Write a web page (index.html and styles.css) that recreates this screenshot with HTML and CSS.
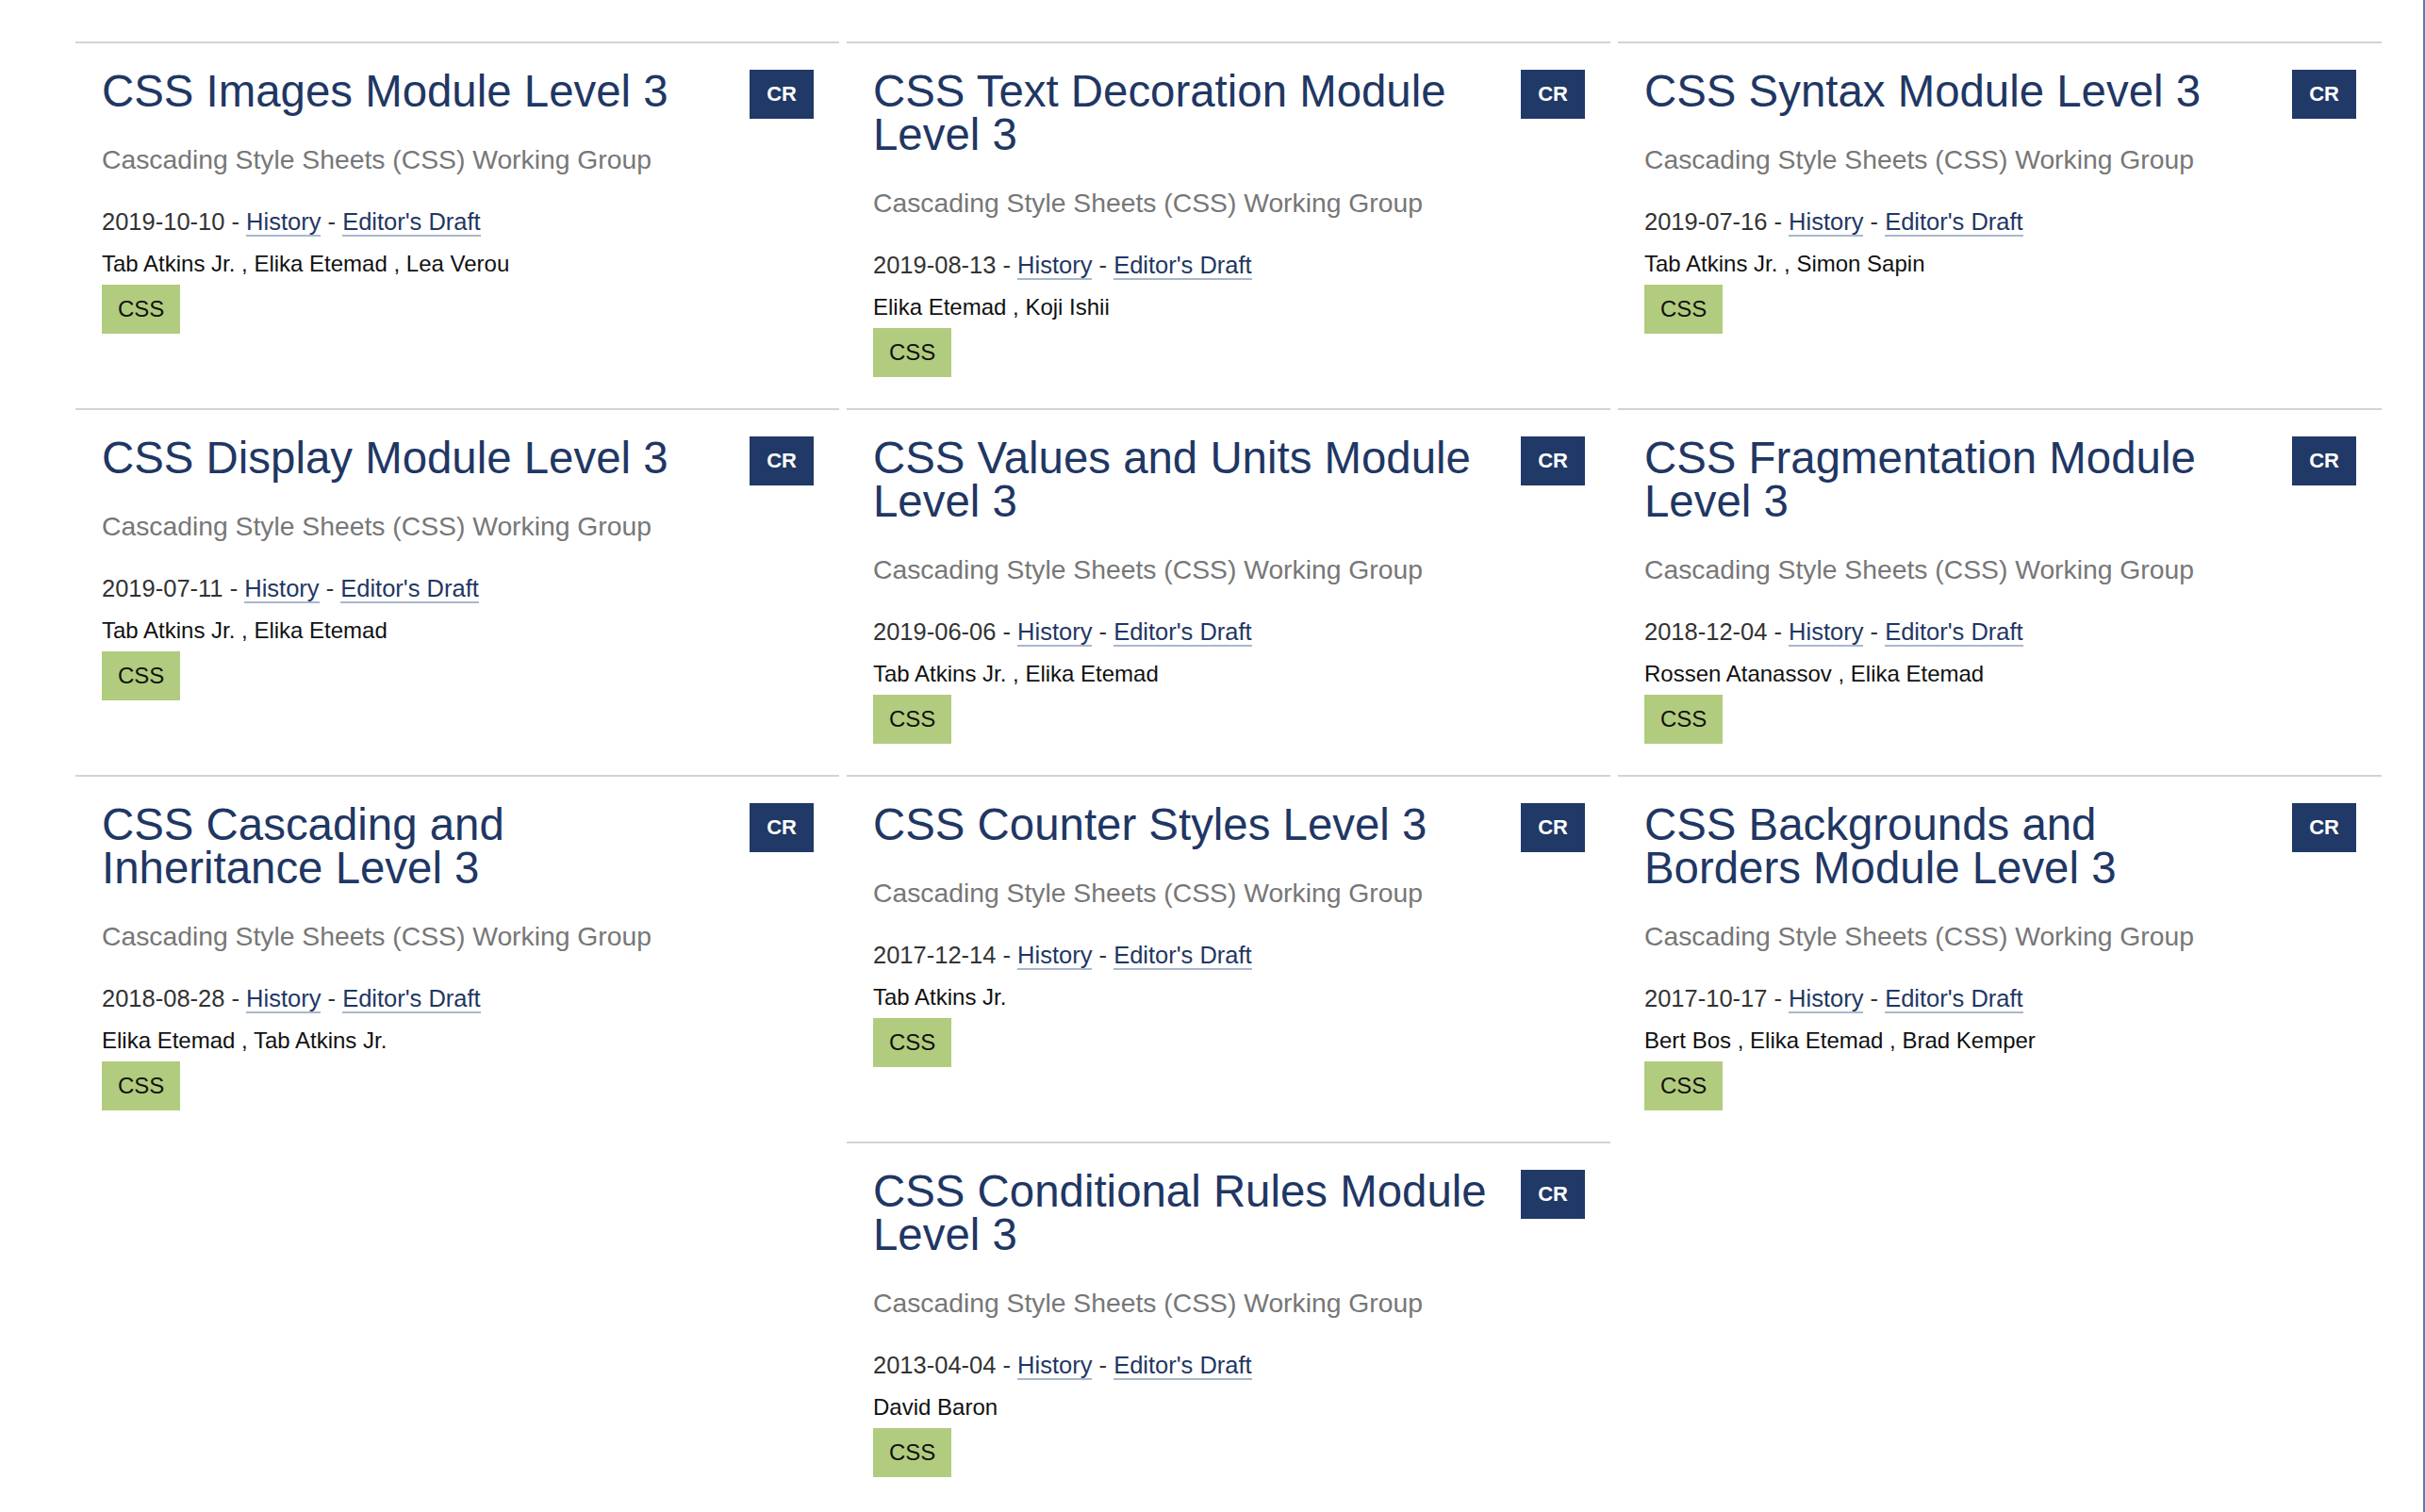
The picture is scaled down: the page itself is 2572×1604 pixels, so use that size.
FILE: index.html
```html
<!DOCTYPE html>
<html lang="en">
<head>
<meta charset="utf-8">
<title>CSS Specifications</title>
<link rel="stylesheet" href="styles.css">
</head>
<body>
<div class="page">
  <main class="specs">
    <div class="spec-list">
      <article class="spec">
        <div class="spec-head">
          <h2 class="spec-title">CSS Images Module Level 3</h2>
          <span class="status">CR</span>
        </div>
        <p class="group">Cascading Style Sheets (CSS) Working Group</p>
        <p class="meta">2019-10-10 - <a href="#">History</a> - <a href="#">Editor's Draft</a></p>
        <p class="editors">Tab Atkins Jr. , Elika Etemad , Lea Verou</p>
        <div class="tags"><span class="tag">CSS</span></div>
      </article>
      <article class="spec">
        <div class="spec-head">
          <h2 class="spec-title">CSS Text Decoration Module Level 3</h2>
          <span class="status">CR</span>
        </div>
        <p class="group">Cascading Style Sheets (CSS) Working Group</p>
        <p class="meta">2019-08-13 - <a href="#">History</a> - <a href="#">Editor's Draft</a></p>
        <p class="editors">Elika Etemad , Koji Ishii</p>
        <div class="tags"><span class="tag">CSS</span></div>
      </article>
      <article class="spec">
        <div class="spec-head">
          <h2 class="spec-title">CSS Syntax Module Level 3</h2>
          <span class="status">CR</span>
        </div>
        <p class="group">Cascading Style Sheets (CSS) Working Group</p>
        <p class="meta">2019-07-16 - <a href="#">History</a> - <a href="#">Editor's Draft</a></p>
        <p class="editors">Tab Atkins Jr. , Simon Sapin</p>
        <div class="tags"><span class="tag">CSS</span></div>
      </article>
      <article class="spec">
        <div class="spec-head">
          <h2 class="spec-title">CSS Display Module Level 3</h2>
          <span class="status">CR</span>
        </div>
        <p class="group">Cascading Style Sheets (CSS) Working Group</p>
        <p class="meta">2019-07-11 - <a href="#">History</a> - <a href="#">Editor's Draft</a></p>
        <p class="editors">Tab Atkins Jr. , Elika Etemad</p>
        <div class="tags"><span class="tag">CSS</span></div>
      </article>
      <article class="spec">
        <div class="spec-head">
          <h2 class="spec-title">CSS Values and Units Module Level 3</h2>
          <span class="status">CR</span>
        </div>
        <p class="group">Cascading Style Sheets (CSS) Working Group</p>
        <p class="meta">2019-06-06 - <a href="#">History</a> - <a href="#">Editor's Draft</a></p>
        <p class="editors">Tab Atkins Jr. , Elika Etemad</p>
        <div class="tags"><span class="tag">CSS</span></div>
      </article>
      <article class="spec">
        <div class="spec-head">
          <h2 class="spec-title">CSS Fragmentation Module Level 3</h2>
          <span class="status">CR</span>
        </div>
        <p class="group">Cascading Style Sheets (CSS) Working Group</p>
        <p class="meta">2018-12-04 - <a href="#">History</a> - <a href="#">Editor's Draft</a></p>
        <p class="editors">Rossen Atanassov , Elika Etemad</p>
        <div class="tags"><span class="tag">CSS</span></div>
      </article>
      <article class="spec">
        <div class="spec-head">
          <h2 class="spec-title">CSS Cascading and Inheritance Level 3</h2>
          <span class="status">CR</span>
        </div>
        <p class="group">Cascading Style Sheets (CSS) Working Group</p>
        <p class="meta">2018-08-28 - <a href="#">History</a> - <a href="#">Editor's Draft</a></p>
        <p class="editors">Elika Etemad , Tab Atkins Jr.</p>
        <div class="tags"><span class="tag">CSS</span></div>
      </article>
      <article class="spec">
        <div class="spec-head">
          <h2 class="spec-title">CSS Counter Styles Level 3</h2>
          <span class="status">CR</span>
        </div>
        <p class="group">Cascading Style Sheets (CSS) Working Group</p>
        <p class="meta">2017-12-14 - <a href="#">History</a> - <a href="#">Editor's Draft</a></p>
        <p class="editors">Tab Atkins Jr.</p>
        <div class="tags"><span class="tag">CSS</span></div>
      </article>
      <article class="spec">
        <div class="spec-head">
          <h2 class="spec-title">CSS Backgrounds and Borders Module Level 3</h2>
          <span class="status">CR</span>
        </div>
        <p class="group">Cascading Style Sheets (CSS) Working Group</p>
        <p class="meta">2017-10-17 - <a href="#">History</a> - <a href="#">Editor's Draft</a></p>
        <p class="editors">Bert Bos , Elika Etemad , Brad Kemper</p>
        <div class="tags"><span class="tag">CSS</span></div>
      </article>
      <article class="spec">
        <div class="spec-head">
          <h2 class="spec-title">CSS Conditional Rules Module Level 3</h2>
          <span class="status">CR</span>
        </div>
        <p class="group">Cascading Style Sheets (CSS) Working Group</p>
        <p class="meta">2013-04-04 - <a href="#">History</a> - <a href="#">Editor's Draft</a></p>
        <p class="editors">David Baron</p>
        <div class="tags"><span class="tag">CSS</span></div>
      </article>
    </div>
  </main>
  <div class="edge"></div>
</div>
</body>
</html>
```

FILE: styles.css
```css
html, body {
  margin: 0;
  padding: 0;
  background: #ffffff;
}

body {
  font-family: "Liberation Sans", Arial, Helvetica, sans-serif;
  color: #111111;
  overflow: hidden;
}

.page {
  display: flex;
  min-height: 100vh;
}

.specs {
  flex: 1;
  padding: 44px 0 0 80px;
}

.edge {
  flex: none;
  width: 2px;
  background: #5a7eb1;
}

.spec-list {
  width: 2446px;
  display: flex;
  flex-wrap: wrap;
  justify-content: center;
  column-gap: 8px;
}

.spec {
  box-sizing: border-box;
  width: 810px;
  border-top: 2px solid #d3d3d3;
  padding: 28px 27px 33px 28px;
}

.spec-head {
  display: flex;
  align-items: flex-start;
  gap: 33px;
}

.spec-title {
  flex: 1;
  margin: 0;
  font-size: 47.4px;
  line-height: 46px;
  font-weight: normal;
  color: #1f3764;
}

.status {
  flex: none;
  height: 52px;
  margin-bottom: -6px;
  padding: 0 18px;
  background: #203966;
  color: #ffffff;
  font-weight: bold;
  font-size: 22px;
  line-height: 52px;
}

.group {
  margin: 33px 0 0;
  font-size: 28.3px;
  line-height: 32px;
  color: #777777;
}

.meta {
  margin: 36px 0 0;
  font-size: 25.5px;
  line-height: 29px;
  color: #333333;
}

.meta a {
  color: #1f3764;
  text-decoration: none;
  border-bottom: 2px solid #a9b7cb;
}

.editors {
  margin: 16px 0 0;
  font-size: 24px;
  line-height: 28px;
  color: #111111;
}

.tags {
  margin-top: 8px;
  display: flex;
}

.tag {
  padding: 12px 17px;
  font-size: 24px;
  line-height: 28px;
  background: #b1cc7e;
  color: #111111;
}
```
